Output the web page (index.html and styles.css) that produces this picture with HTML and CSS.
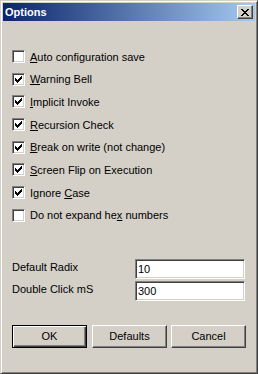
FILE: index.html
```html
<!DOCTYPE html>
<html lang="en">
<head>
    <meta charset="UTF-8">
    <title>Options</title>
    <link rel="stylesheet" href="styles.css">
</head>
<body>
    <div id="window">
        <div class="titlebar">
            <span class="title">Options</span>
            <button class="close-btn" aria-label="Close">
                <svg width="8" height="7" viewBox="0 0 8 7" shape-rendering="crispEdges">
                    <path fill="#000" d="M0 0h2v1h-2zM6 0h2v1h-2zM1 1h2v1h-2zM5 1h2v1h-2zM2 2h4v1h-4zM3 3h2v1h-2zM2 4h4v1h-4zM1 5h2v1h-2zM5 5h2v1h-2zM0 6h2v1h-2zM6 6h2v1h-2z"/>
                </svg>
            </button>
        </div>
        <div class="content">
            <div class="checklist">
                <label class="check"><span class="box"></span><span><u>A</u>uto configuration save</span></label>
                <label class="check checked"><span class="box"></span><span><u>W</u>arning Bell</span></label>
                <label class="check checked"><span class="box"></span><span><u>I</u>mplicit Invoke</span></label>
                <label class="check checked"><span class="box"></span><span><u>R</u>ecursion Check</span></label>
                <label class="check checked"><span class="box"></span><span><u>B</u>reak on write (not change)</span></label>
                <label class="check checked"><span class="box"></span><span><u>S</u>creen Flip on Execution</span></label>
                <label class="check checked"><span class="box"></span><span>Ignore <u>C</u>ase</span></label>
                <label class="check"><span class="box"></span><span>Do not expand he<u>x</u> numbers</span></label>
            </div>
            <div class="fields">
                <label for="radix">Default Radix</label>
                <input id="radix" class="field" type="text" value="10">
                <label for="dblclick">Double Click mS</label>
                <input id="dblclick" class="field" type="text" value="300">
            </div>
            <div class="buttons">
                <button class="button default">OK</button>
                <button class="button">Defaults</button>
                <button class="button">Cancel</button>
            </div>
        </div>
    </div>
</body>
</html>
```
FILE: styles.css
```css
body {
    margin: 0;
    font-family: 'Liberation Sans', Arial, sans-serif;
    font-size: 11px;
    color: #000;
    background: #d4d0c8;
}

#window {
    width: 258px;
    height: 374px;
    box-sizing: border-box;
    background: #d4d0c8;
    border: 1px solid;
    border-color: #d4d0c8 #404040 #404040 #d4d0c8;
    box-shadow: inset 1px 1px #fff, inset -1px -1px #808080;
    padding: 2px;
}

.titlebar {
    height: 18px;
    display: flex;
    align-items: center;
    justify-content: space-between;
    padding: 0 2px 0 2px;
    background: linear-gradient(to right, #0a246a, #a6caf0);
}

.title {
    color: #fff;
    font-weight: bold;
    font-size: 11px;
}

.close-btn {
    width: 16px;
    height: 14px;
    padding: 0;
    margin: 0;
    display: flex;
    align-items: center;
    justify-content: center;
    background: #d4d0c8;
    border: 1px solid;
    border-color: #fff #404040 #404040 #fff;
    box-shadow: inset -1px -1px #808080;
}

.content {
    padding: 29px 10px 0 9px;
}

.checklist {
    display: flex;
    flex-direction: column;
    gap: 9.7px;
}

.check {
    display: flex;
    align-items: center;
    height: 13px;
    gap: 5px;
}

.check u {
    text-decoration-thickness: 1px;
}

.box {
    width: 13px;
    height: 13px;
    box-sizing: border-box;
    background: #fff;
    border: 1px solid;
    border-color: #808080 #fff #fff #808080;
    box-shadow: inset 1px 1px #404040, inset -1px -1px #d4d0c8;
    display: flex;
    align-items: center;
    justify-content: center;
}

.checked .box::after {
    content: '';
    width: 7px;
    height: 7px;
    background: url("data:image/svg+xml,%3Csvg xmlns='http://www.w3.org/2000/svg' width='7' height='7' shape-rendering='crispEdges'%3E%3Cpath d='M6 0h1v1h-1zM5 1h2v1h-2zM0 2h1v1h-1zM4 2h3v1h-3zM0 3h2v1h-2zM3 3h3v1h-3zM0 4h5v1h-5zM1 5h3v1h-3zM2 6h1v1h-1z'/%3E%3C/svg%3E") no-repeat;
}

.fields {
    display: grid;
    grid-template-columns: 1fr 110px;
    row-gap: 2px;
    align-items: center;
    margin-top: 37px;
}

.field {
    width: 110px;
    height: 20px;
    box-sizing: border-box;
    margin: 0;
    padding: 1px 2px 0;
    font-family: inherit;
    font-size: 11px;
    background: #fff;
    border: 1px solid;
    border-color: #808080 #fff #fff #808080;
    box-shadow: inset 1px 1px #404040, inset -1px -1px #d4d0c8;
    outline: none;
}

.fields label {
    margin-top: -3px;
}

.buttons {
    display: flex;
    margin-top: 24px;
}

.button {
    flex-shrink: 0;
    width: 75px;
    height: 23px;
    margin: 0 5px 0 0;
    padding: 0;
    font-family: inherit;
    font-size: 11px;
    color: #000;
    background: #d4d0c8;
    border: 1px solid;
    border-color: #fff #404040 #404040 #fff;
    box-shadow: inset -1px -1px #808080;
}

.button + .button + .button {
    margin-left: -1px;
}

.button.default {
    border-color: #000;
    box-shadow: inset 1px 1px #fff, inset -1px -1px #404040, inset -2px -2px #808080;
}
```
